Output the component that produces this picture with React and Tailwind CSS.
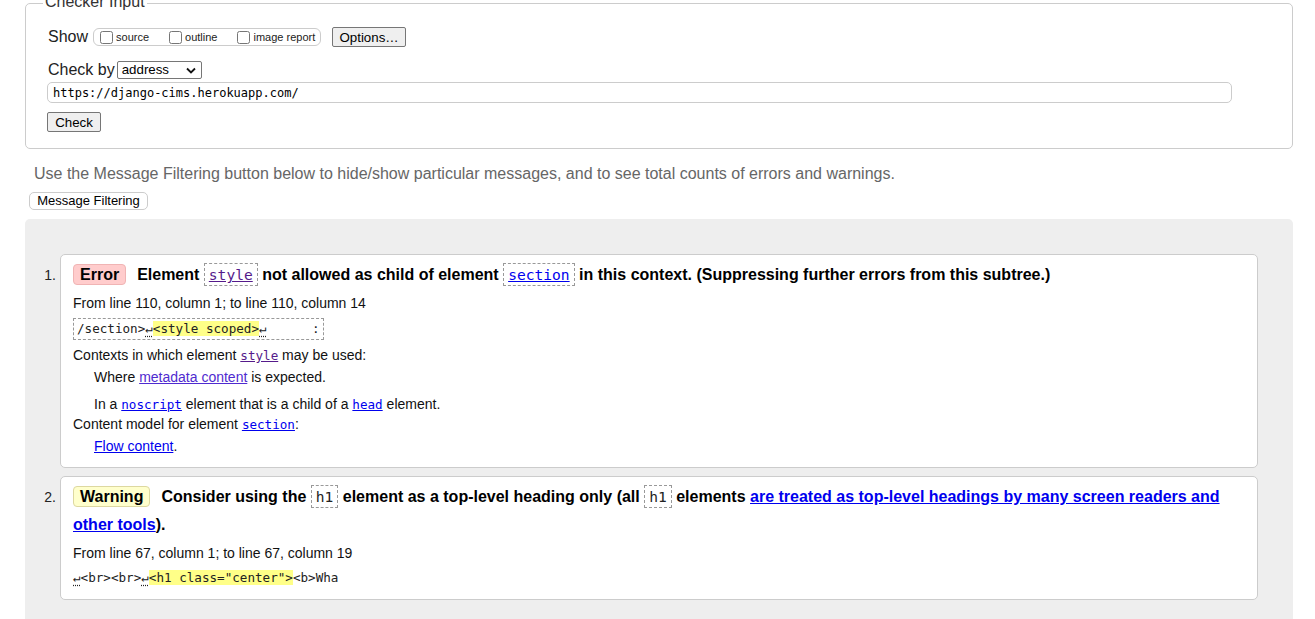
import React from "react"

const mono = "font-['DejaVu_Sans_Mono','Liberation_Mono',monospace]"

function Chevron() {
  return (
    <svg width="10" height="7" viewBox="0 0 10 7" className="ml-auto mr-[5px]">
      <path d="M1 1.5l4 4 4-4" fill="none" stroke="#111" strokeWidth="1.8" />
    </svg>
  )
}

function Check({ label }) {
  return (
    <label className="flex items-center">
      <input type="checkbox" readOnly className="h-[13px] w-[13px]" />
      <span className="ml-[3px] text-[11px] text-[#222]">{label}</span>
    </label>
  )
}

function CheckerInput() {
  return (
    <div className="relative mt-[3px] h-[146px] rounded-[5px] border border-[#ccc] pl-[22px] pt-[23px]">
      <div className="absolute left-[17px] top-[-11px] bg-white px-[2px] text-[16px] leading-[18px] text-[#333]">
        Checker Input
      </div>
      <div className="flex h-[20px] items-center">
        <span className="text-[16px] text-[#222]">Show</span>
        <div className="ml-[5px] flex h-[18px] w-[228px] items-center gap-[20px] rounded-[6px] border border-[#ccc] pl-[6px]">
          <Check label="source" />
          <Check label="outline" />
          <Check label="image report" />
        </div>
        <button
          type="button"
          className="ml-[11px] h-[20px] w-[74px] rounded-[2px] border border-[#767676] bg-[#efefef] text-[13.3px] text-black"
        >
          Options…
        </button>
      </div>
      <div className="mt-[14px] flex h-[18px] items-center">
        <span className="text-[16px] text-[#222]">Check by</span>
        <div className="ml-[2px] flex h-[18px] w-[85px] items-center rounded-[2px] border border-[#767676] pl-[4px] text-[13.3px] text-black">
          address
          <Chevron />
        </div>
      </div>
      <div
        className={`-ml-[1px] mt-[3px] flex h-[21px] w-[1185px] items-center rounded-[5px] border border-[#ccc] pl-[5px] text-[12px] text-black ${mono}`}
      >
        https://django-cims.herokuapp.com/
      </div>
      <button
        type="button"
        className="-ml-[1px] mt-[9px] block h-[20px] w-[54px] rounded-[2px] border border-[#767676] bg-[#efefef] text-[13.3px] text-black"
      >
        Check
      </button>
    </div>
  )
}

function Badge({ kind, children }) {
  const tone =
    kind === "error"
      ? "bg-[#fcc] border-[#f0b4b4]"
      : "bg-[#ffc] border-[#ddd8a0]"
  return (
    <span className={`mr-[11px] inline-block rounded-[4px] border px-[6px] leading-[19px] ${tone}`}>
      {children}
    </span>
  )
}

function Code({ children, visited }) {
  return (
    <span
      className={`inline-block border border-dashed border-[#999] px-[4px] text-[14.6px] font-normal leading-[21px] underline ${mono} ${
        visited ? "text-[#551a8b]" : "text-[#00e]"
      }`}
    >
      {children}
    </span>
  )
}

function PlainCode({ children }) {
  return (
    <span className={`inline-block border border-dashed border-[#999] px-[4px] text-[14.6px] font-normal leading-[21px] text-[#222] ${mono}`}>
      {children}
    </span>
  )
}

function Ref({ children, visited }) {
  return (
    <span className={`text-[12.6px] underline ${mono} ${visited ? "text-[#551a8b]" : "text-[#00e]"}`}>
      {children}
    </span>
  )
}

function Ret() {
  return <span className="underline decoration-dotted underline-offset-[3px]">↵</span>
}

function Item({ n, children }) {
  return (
    <li className="flex">
      <div className="w-[35px] pr-[4px] pt-[12px] text-right text-[14px] leading-[18px] text-[#222]">
        {n}.
      </div>
      <div className="flex-1 rounded-[5px] border border-[#ccc] bg-white px-[12px] pb-[12px] pt-[6px] text-[14px] text-[#111]">
        {children}
      </div>
    </li>
  )
}

export default function App() {
  return (
    <main className="min-h-screen overflow-hidden bg-white pl-[25px] pr-[22px] font-['Liberation_Sans',Arial,sans-serif]">
      <CheckerInput />
      <p className="mt-[16px] pl-[9px] text-[16px] leading-[18px] text-[#666]">
        Use the Message Filtering button below to hide/show particular messages, and to see total counts of errors and warnings.
      </p>
      <button
        type="button"
        className="ml-[4px] mt-[9px] block h-[18px] w-[119px] rounded-[5px] border border-[#ccc] bg-white text-[13px] leading-[16px] text-black"
      >
        Message Filtering
      </button>
      <section className="mt-[9px] rounded-t-[5px] bg-[#eee] pb-[30px] pr-[35px] pt-[35px]">
        <ol className="flex flex-col gap-[8px]">
          <Item n={1}>
            <div className="text-[16px] font-bold leading-[28px] text-black">
              <Badge kind="error">Error</Badge>
              Element <Code visited>style</Code> not allowed as child of element <Code>section</Code> in this context. (Suppressing further errors from this subtree.)
            </div>
            <div className="mt-[5px] leading-[18px]">From line 110, column 1; to line 110, column 14</div>
            <div
              className={`mt-[6px] w-fit whitespace-pre border border-dashed border-[#999] px-[3px] text-[12.6px] leading-[20px] text-[#222] ${mono}`}
            >
              /section&gt;<Ret />
              <span className="bg-[#ff8]">&lt;style scoped&gt;</span>
              <Ret />
              {"      :"}
            </div>
            <div className="mt-[6px] leading-[18px]">
              Contexts in which element <Ref visited>style</Ref> may be used:
            </div>
            <div className="mt-[3px] pl-[21px] leading-[18px]">
              Where <span className="text-[#4f2bd0] underline">metadata content</span> is expected.
            </div>
            <div className="mt-[9px] pl-[21px] leading-[18px]">
              In a <Ref>noscript</Ref> element that is a child of a <Ref>head</Ref> element.
            </div>
            <div className="mt-[1px] leading-[18px]">
              Content model for element <Ref>section</Ref>:
            </div>
            <div className="mt-[3px] pl-[21px] leading-[18px]">
              <span className="text-[#00e] underline">Flow content</span>.
            </div>
          </Item>
          <Item n={2}>
            <div className="text-[16px] font-bold leading-[28px] text-black">
              <Badge kind="warning">Warning</Badge>
              Consider using the <PlainCode>h1</PlainCode> element as a top-level heading only (all <PlainCode>h1</PlainCode> elements{" "}
              <span className="text-[#00e] underline">are treated as top-level headings by many screen readers and other tools</span>).
            </div>
            <div className="mt-[5px] leading-[18px]">From line 67, column 1; to line 67, column 19</div>
            <div className={`mt-[7px] whitespace-pre text-[12.6px] leading-[18px] text-[#222] ${mono}`}>
              <Ret />
              &lt;br&gt;&lt;br&gt;
              <Ret />
              <span className="bg-[#ff8]">&lt;h1 class="center"&gt;</span>
              &lt;b&gt;Wha
            </div>
          </Item>
        </ol>
      </section>
    </main>
  )
}
